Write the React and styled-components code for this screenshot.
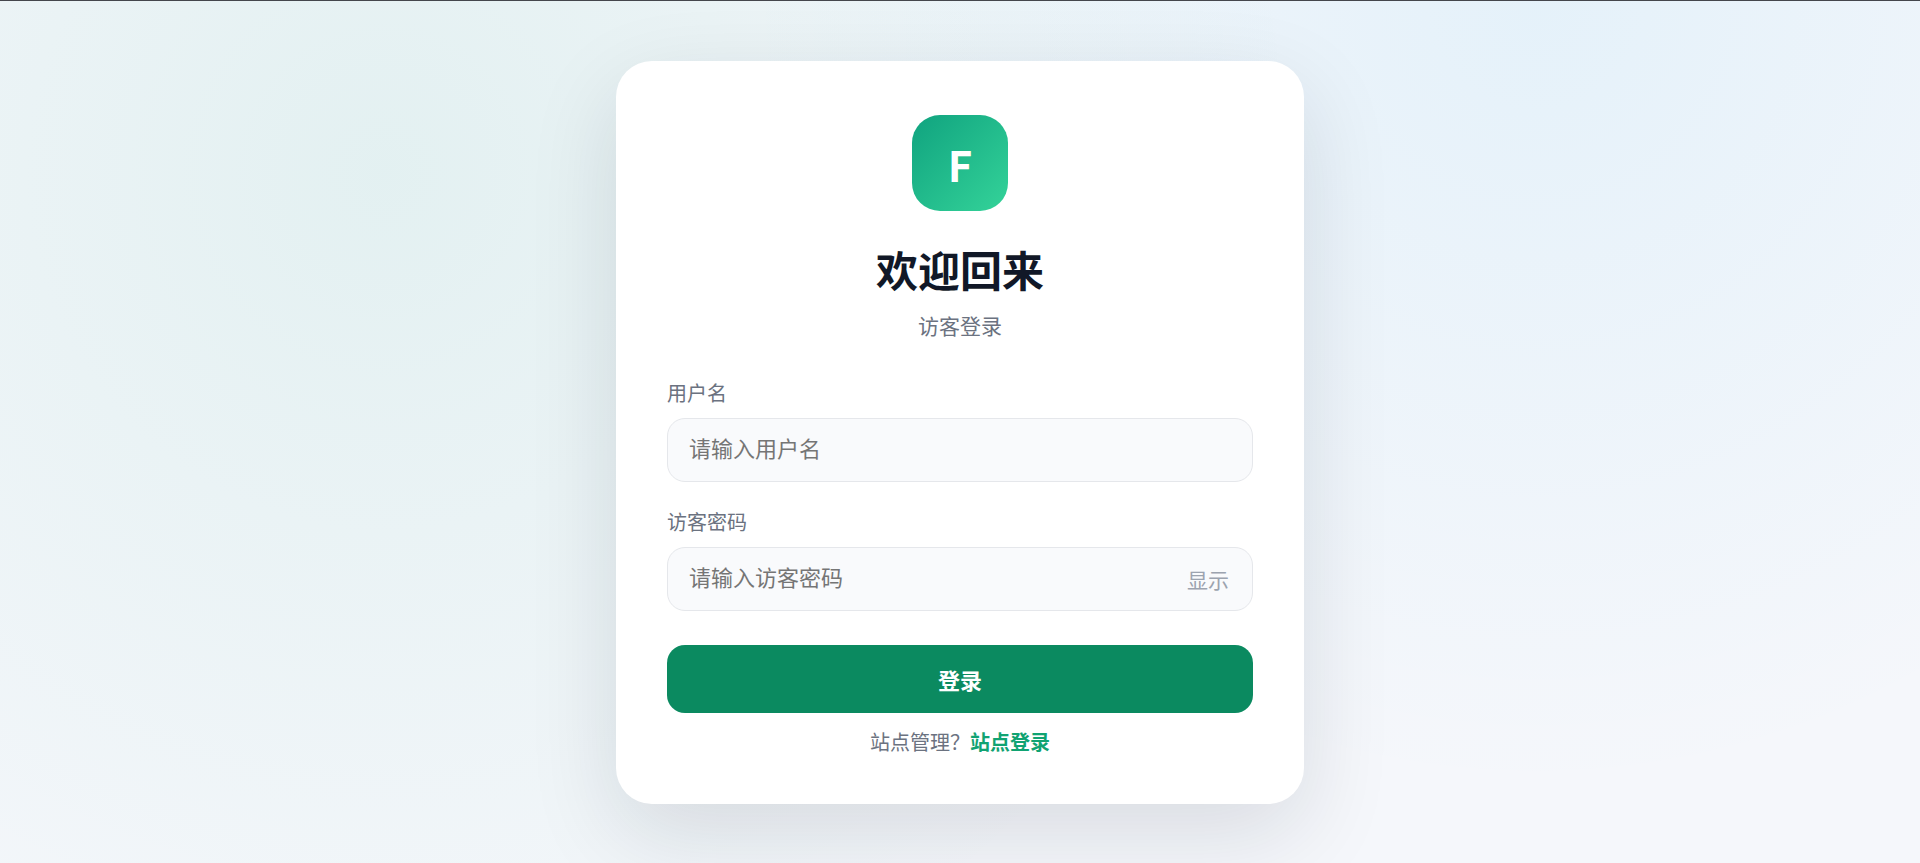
import React, { useState } from "react";
import styled, { createGlobalStyle } from "styled-components";

const GlobalStyle = createGlobalStyle`
  * {
    box-sizing: border-box;
  }

  body {
    margin: 0;
    color: #111827;
    font-family: "Noto Sans CJK SC", "Noto Sans", sans-serif;
  }

  input,
  button {
    font-family: inherit;
  }
`;

const Page = styled.main`
  min-height: 100vh;
  display: flex;
  align-items: center;
  justify-content: center;
  padding: 24px;
  border-top: 1px solid #44464c;
  background: radial-gradient(
      circle at 20% 20%,
      rgba(16, 163, 127, 0.08),
      transparent 55%
    ),
    radial-gradient(
      circle at 80% 0%,
      rgba(14, 165, 233, 0.07),
      transparent 45%
    ),
    #f5f7fb;
`;

const Card = styled.section`
  width: 100%;
  max-width: 688px;
  padding: 54px 51px 49px;
  border-radius: 36px;
  background: #fff;
  box-shadow: 0 30px 90px rgba(15, 23, 42, 0.12);
`;

const Header = styled.header`
  display: flex;
  flex-direction: column;
  align-items: center;
  margin-bottom: 40px;
`;

const Logo = styled.div`
  width: 96px;
  height: 96px;
  display: flex;
  align-items: center;
  justify-content: center;
  margin-bottom: 28px;
  padding-top: 2px;
  border-radius: 28px;
  background: linear-gradient(135deg, #10a37f, #34d399);
  color: #fff;
  font-size: 42px;
  font-weight: 700;
`;

const Title = styled.h1`
  margin: 0 0 12px;
  font-size: 42px;
  line-height: 60px;
  font-weight: 700;
`;

const SubTitle = styled.p`
  margin: 0;
  color: #6b7280;
  font-size: 21px;
  line-height: 28px;
`;

const Form = styled.form`
  display: flex;
  flex-direction: column;
`;

const Field = styled.div`
  display: flex;
  flex-direction: column;
  gap: 11px;
  margin-bottom: 26px;
`;

const Label = styled.label`
  color: #6b7280;
  font-size: 20px;
  line-height: 28px;
`;

const InputHolder = styled.div`
  position: relative;
`;

const Input = styled.input`
  display: block;
  width: 100%;
  height: 64px;
  padding: 0 21px 5px;
  border: 1px solid #e5e7eb;
  border-radius: 18px;
  background: #f9fafc;
  color: #111827;
  font-size: 22px;
  outline: none;

  &:focus {
    border-color: #10a37f;
  }
`;

const Toggle = styled.button`
  position: absolute;
  top: 0;
  right: 16px;
  height: 100%;
  padding: 0 8px;
  border: 0;
  background: none;
  color: #9ca3af;
  font-size: 21px;
  cursor: pointer;
`;

const Submit = styled.button`
  height: 68px;
  margin-top: 8px;
  border: 0;
  border-radius: 18px;
  background: #0b8a60;
  color: #fff;
  font-size: 22px;
  font-weight: 700;
  cursor: pointer;
`;

const Footer = styled.p`
  margin: 16px 0 0;
  color: #6b7280;
  font-size: 20px;
  line-height: 26px;
  text-align: center;
`;

const FooterLink = styled.a`
  color: #10a372;
  font-weight: 700;
  text-decoration: none;
`;

const App = () => {
  const [visible, setVisible] = useState(false);

  return (
    <>
      <GlobalStyle />
      <Page>
        <Card>
          <Header>
            <Logo>F</Logo>
            <Title>欢迎回来</Title>
            <SubTitle>访客登录</SubTitle>
          </Header>
          <Form onSubmit={(e) => e.preventDefault()}>
            <Field>
              <Label htmlFor="username">用户名</Label>
              <Input id="username" type="text" placeholder="请输入用户名" />
            </Field>
            <Field>
              <Label htmlFor="password">访客密码</Label>
              <InputHolder>
                <Input
                  id="password"
                  type={visible ? "text" : "password"}
                  placeholder="请输入访客密码"
                />
                <Toggle type="button" onClick={() => setVisible(!visible)}>
                  {visible ? "隐藏" : "显示"}
                </Toggle>
              </InputHolder>
            </Field>
            <Submit type="submit">登录</Submit>
          </Form>
          <Footer>
            站点管理？<FooterLink href="#site">站点登录</FooterLink>
          </Footer>
        </Card>
      </Page>
    </>
  );
};

export default App;
